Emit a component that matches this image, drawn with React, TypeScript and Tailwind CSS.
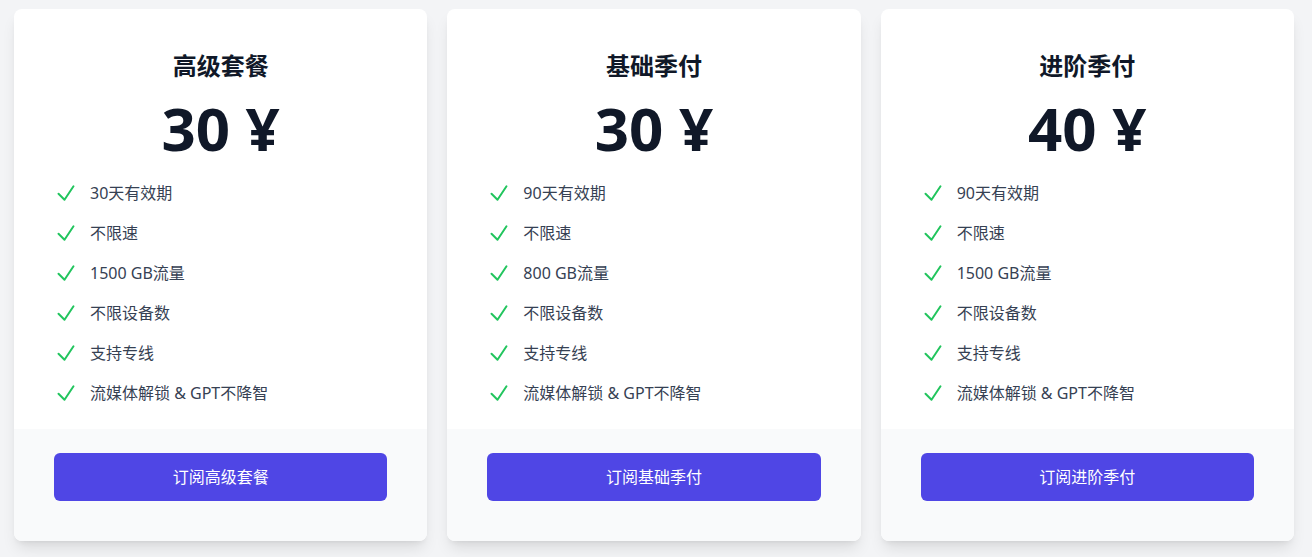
import React from 'react';

interface Plan {
    name: string;
    price: number;
    features: string[];
}

const plans: Plan[] = [
    {
        name: '高级套餐',
        price: 30,
        features: ['30天有效期', '不限速', '1500 GB流量', '不限设备数', '支持专线', '流媒体解锁 & GPT不降智'],
    },
    {
        name: '基础季付',
        price: 30,
        features: ['90天有效期', '不限速', '800 GB流量', '不限设备数', '支持专线', '流媒体解锁 & GPT不降智'],
    },
    {
        name: '进阶季付',
        price: 40,
        features: ['90天有效期', '不限速', '1500 GB流量', '不限设备数', '支持专线', '流媒体解锁 & GPT不降智'],
    },
];

function CheckIcon() {
    return (
        <svg className="h-6 w-6 shrink-0 text-[#22c55e]" viewBox="0 0 24 24" fill="none" stroke="currentColor" strokeWidth={2}>
            <path strokeLinecap="round" strokeLinejoin="round" d="M4.5 12.75l6 6 9-13.5" />
        </svg>
    );
}

function PlanCard({ plan }: { plan: Plan }) {
    return (
        <div className="flex flex-col overflow-hidden rounded-lg bg-white shadow-lg">
            <div className="px-10 pt-[41px] pb-6">
                <h3 className="text-center text-2xl font-bold text-gray-900">{plan.name}</h3>
                <div className="mt-4 text-center text-6xl leading-none font-bold text-gray-900">
                    {plan.price} ¥
                </div>
                <ul className="mt-[23px] space-y-4">
                    {plan.features.map((f) => (
                        <li key={f} className="flex items-center">
                            <CheckIcon />
                            <span className="ml-3 text-base leading-6 text-gray-700">{f}</span>
                        </li>
                    ))}
                </ul>
            </div>
            <div className="bg-gray-50 px-10 pt-6 pb-10">
                <button className="h-12 w-full rounded-md bg-[#4f46e5] text-base font-normal text-white">
                    订阅{plan.name}
                </button>
            </div>
        </div>
    );
}

export default function App() {
    return (
        <div
            className="min-h-[557px] bg-gray-100 pt-[9px] pr-[18px] pl-[14px]"
            style={{ fontFamily: '"Noto Sans", "Noto Sans CJK SC", sans-serif' }}
        >
            <div className="grid grid-cols-3 gap-5">
                {plans.map((p) => (
                    <PlanCard key={p.name} plan={p} />
                ))}
            </div>
        </div>
    );
}
